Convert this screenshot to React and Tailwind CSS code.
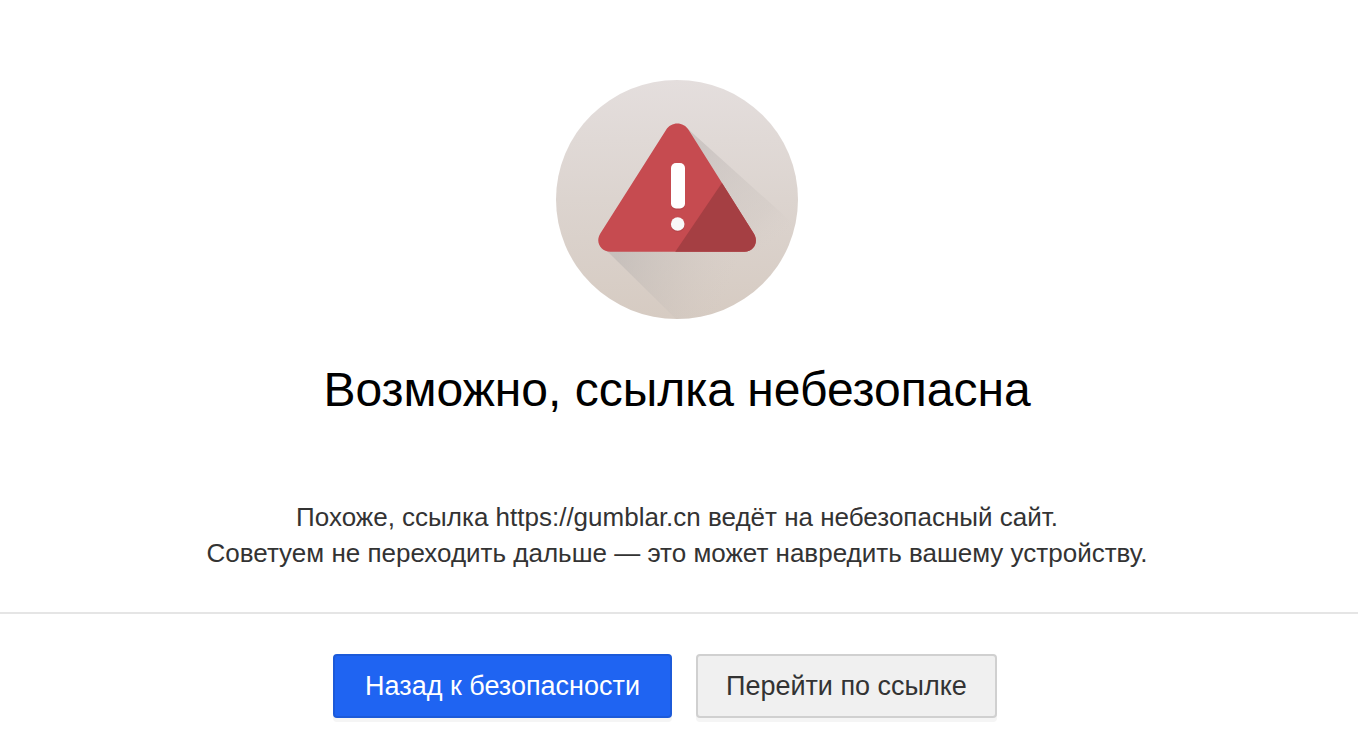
function WarningIcon() {
  return (
    <svg width="242" height="239" viewBox="0 0 242 239" fill="none" aria-hidden="true">
      <defs>
        <linearGradient id="disc" x1="0" y1="0" x2="0" y2="239" gradientUnits="userSpaceOnUse">
          <stop offset="0" stopColor="#e4dedd" />
          <stop offset="0.5" stopColor="#dcd4cf" />
          <stop offset="1" stopColor="#d6cbc2" />
        </linearGradient>
        <linearGradient id="shadeRight" x1="140" y1="70" x2="215" y2="165" gradientUnits="userSpaceOnUse">
          <stop offset="0" stopColor="#bdb7b5" stopOpacity="0.55" />
          <stop offset="0.75" stopColor="#cdc5c0" stopOpacity="0.3" />
          <stop offset="1" stopColor="#d6cec9" stopOpacity="0" />
        </linearGradient>
        <linearGradient id="shadeBottom" x1="60" y1="180" x2="170" y2="218" gradientUnits="userSpaceOnUse">
          <stop offset="0" stopColor="#b8b3b1" stopOpacity="0.55" />
          <stop offset="0.5" stopColor="#c3bcb7" stopOpacity="0.3" />
          <stop offset="1" stopColor="#d2c9c3" stopOpacity="0" />
        </linearGradient>
        <clipPath id="discClip">
          <ellipse cx="121" cy="119.5" rx="121" ry="119.5" />
        </clipPath>
        <clipPath id="triangleClip">
          <path d="M110 50C115 41.200 127.600 41.200 132.700 50L197.800 153.500C203 162 198 171.700 188.500 171.700H54.500C44.500 171.700 39 162 44.300 153.500Z" />
        </clipPath>
      </defs>

      <ellipse cx="121" cy="119.5" rx="121" ry="119.5" fill="url(#disc)" />

      {/* Long shadow */}
      <g clipPath="url(#discClip)">
        <path d="M132 49L242 148V171H190Z" fill="url(#shadeRight)" />
        <path d="M50 170H242V239H120Z" fill="url(#shadeBottom)" />
      </g>

      {/* Triangle */}
      <g clipPath="url(#triangleClip)">
        <rect x="36" y="40" width="170" height="134" fill="#c64b50" />
        <path d="M165.700 103.300L119.300 171.700V174H210V103.300Z" fill="#a53f43" />
      </g>

      <rect x="115" y="84" width="14" height="46" rx="5" fill="#a94045" opacity="0.5" />
      <circle cx="121.700" cy="145" r="7" fill="#a94045" opacity="0.5" />
      <rect x="115" y="83" width="14" height="45.500" rx="5" fill="#fff" />
      <circle cx="121.700" cy="144" r="6.800" fill="#f8f8f8" />
    </svg>
  );
}

function App() {
  return (
    <main className="min-h-screen bg-white pt-20 pb-6 font-['Liberation_Sans',Arial,sans-serif] text-[26px] leading-9 text-[#333333]">
      <div className="flex flex-col items-center pr-1 text-center">
        <WarningIcon />
        <h1 className="mt-10 text-5xl leading-[62px] text-black">Возможно, ссылка небезопасна</h1>
        <p className="mt-[78px] px-4">
          Похоже, ссылка https://gumblar.cn ведёт на небезопасный сайт.
          <br />
          Советуем не переходить дальше — это может навредить вашему устройству.
        </p>
      </div>

      {/* Actions */}
      <div className="mt-[41px] flex flex-wrap justify-center gap-6 border-t-2 border-[#e5e5e5] pt-10 pr-7 text-[27px]">
        <button
          type="button"
          className="cursor-pointer rounded border-2 border-[#1c5ad9] bg-[#1f64f2] px-[30px] py-3 text-white shadow-[0_4px_0_#f5f5f5] hover:bg-[#1c5ad9]"
        >
          Назад к безопасности
        </button>
        <button
          type="button"
          className="cursor-pointer rounded border-2 border-[#d0d0d0] bg-[#f0f0f0] px-7 py-3 shadow-[0_4px_0_#f5f5f5] hover:bg-[#e5e5e5]"
        >
          Перейти по ссылке
        </button>
      </div>
    </main>
  );
}

export default App;
